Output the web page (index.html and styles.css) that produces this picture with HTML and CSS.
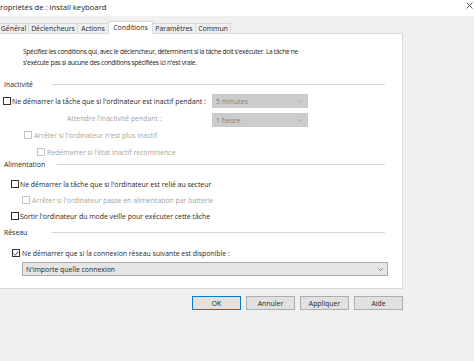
FILE: index.html
```html
<!DOCTYPE html>
<html lang="fr">
<head>
    <meta charset="UTF-8">
    <title>Propriétés de : install keyboard</title>
    <link rel="stylesheet" href="styles.css">
</head>
<body>
    <div class="titlebar">
        <span class="title">ropriétés de : install keyboard</span>
        <svg class="close" width="7" height="7" viewBox="0 0 7 7"><path d="M0.5 0.5L6.5 6.5M6.5 0.5L0.5 6.5" stroke="#333" stroke-width="0.8"/></svg>
    </div>

    <div class="tabs">
        <div class="tab tab-general">Général</div>
        <div class="tab tab-triggers">Déclencheurs</div>
        <div class="tab tab-actions">Actions</div>
        <div class="tab tab-conditions active">Conditions</div>
        <div class="tab tab-settings">Paramètres</div>
        <div class="tab tab-common">Commun</div>
    </div>

    <div class="panel">
        <p class="desc">Spécifiez les conditions qui, avec le déclencheur, déterminent si la tâche doit s'exécuter. La tâche ne<br>s'exécute pas si aucune des conditions spécifiées ici n'est vraie.</p>

        <div class="group group-idle"><span class="group-label">Inactivité</span><span class="group-line"></span></div>
        <div class="field-row row-idle">
            <label class="check"><span class="box"></span>Ne démarrer la tâche que si l'ordinateur est inactif pendant :</label>
            <div class="select disabled"><span>5 minutes</span><svg width="5" height="3" viewBox="0 0 5 3"><path d="M0.3 0.3L2.5 2.5L4.7 0.3" fill="none" stroke="#999" stroke-width="0.7"/></svg></div>
        </div>
        <div class="field-row row-wait">
            <span class="muted wait-label">Attendre l'inactivité pendant :</span>
            <div class="select disabled"><span>1 heure</span><svg width="5" height="3" viewBox="0 0 5 3"><path d="M0.3 0.3L2.5 2.5L4.7 0.3" fill="none" stroke="#999" stroke-width="0.7"/></svg></div>
        </div>
        <label class="check muted row-stop"><span class="box"></span>Arrêter si l'ordinateur n'est plus inactif</label>
        <label class="check muted row-restart"><span class="box"></span>Redémarrer si l'état inactif recommence</label>

        <div class="group group-power"><span class="group-label">Alimentation</span><span class="group-line"></span></div>
        <label class="check row-ac"><span class="box"></span>Ne démarrer la tâche que si l'ordinateur est relié au secteur</label>
        <label class="check muted row-battery"><span class="box"></span>Arrêter si l'ordinateur passe en alimentation par batterie</label>
        <label class="check row-wake"><span class="box"></span>Sortir l'ordinateur du mode veille pour exécuter cette tâche</label>

        <div class="group group-network"><span class="group-label">Réseau</span><span class="group-line"></span></div>
        <label class="check row-network"><span class="box checked"><svg width="7" height="7" viewBox="0 0 7 7"><path d="M0.8 3.6L2.7 5.4L6.2 1.2" fill="none" stroke="#222" stroke-width="0.9"/></svg></span>Ne démarrer que si la connexion réseau suivante est disponible :</label>
        <div class="select wide"><span>N'importe quelle connexion</span><svg width="5" height="3" viewBox="0 0 5 3"><path d="M0.3 0.3L2.5 2.5L4.7 0.3" fill="none" stroke="#555" stroke-width="0.7"/></svg></div>
    </div>

    <div class="actions">
        <button class="btn btn-default">OK</button>
        <button class="btn">Annuler</button>
        <button class="btn">Appliquer</button>
        <button class="btn">Aide</button>
    </div>
</body>
</html>
```

FILE: styles.css
```css
body {
    margin: 0;
    width: 474px;
    height: 361px;
    overflow: hidden;
    background-color: #f0f0f0;
    font-family: "Open Sans", sans-serif;
    font-size: 6.9px;
    color: #1e1e1e;
}
.titlebar {
    height: 16px;
    background-color: #fff;
    display: flex;
    align-items: center;
    justify-content: space-between;
}
.title {
    font-size: 7.7px;
    margin-top: -2px;
}
.close {
    margin: -6px 1px 0 0;
}
.tabs {
    display: flex;
    align-items: flex-end;
    height: 12px;
    margin: 5px 0 0 -2px;
}
.tab {
    box-sizing: border-box;
    height: 10px;
    line-height: 9px;
    margin-right: -1px;
    border: 1px solid #d9d9d9;
    border-bottom: none;
    background-color: #f0f0f0;
    text-align: center;
    white-space: nowrap;
}
.tab-general { width: 31px; }
.tab-triggers { width: 50px; }
.tab-actions { width: 32px; }
.tab-conditions { width: 45px; }
.tab-settings { width: 44px; }
.tab-common { width: 36px; }
.tab.active {
    position: relative;
    z-index: 1;
    height: 13px;
    line-height: 11px;
    margin-bottom: -1px;
    background-color: #fff;
}
.panel {
    box-sizing: border-box;
    width: 404px;
    height: 256px;
    margin-left: -1px;
    border: 1px solid #d9d9d9;
    background-color: #fff;
}
.desc {
    margin: 12px 0 0 23px;
    font-size: 6.6px;
    letter-spacing: -0.3px;
    line-height: 11px;
    white-space: nowrap;
}
.group {
    display: flex;
    align-items: center;
    width: 381px;
    height: 10px;
    padding-left: 4px;
}
.group-label {
    min-width: 36px;
    margin-right: 12px;
}
.group-line {
    flex: 1;
    border-top: 1px solid #d6d6d6;
}
.group-idle { margin-top: 11px; }
.group-power { margin-top: 0; }
.group-network { margin-top: 4px; }
.check {
    display: flex;
    align-items: center;
    height: 14px;
    white-space: nowrap;
}
.box {
    box-sizing: border-box;
    width: 8px;
    height: 8px;
    margin-right: 1px;
    border: 1px solid #333;
    background-color: #fff;
    display: flex;
    align-items: center;
    justify-content: center;
}
.muted {
    color: #a3a3a3;
}
.muted .box {
    border-color: #c4c4c4;
}
.field-row {
    display: grid;
    grid-template-columns: 212px 96px;
    align-items: center;
    height: 14px;
}
.row-idle { margin-top: 5px; }
.row-idle .check { padding-left: 3px; }
.row-wait { margin-top: 5px; }
.wait-label { padding-left: 67px; margin-top: -3px; }
.row-stop { margin-top: 1px; padding-left: 24px; }
.row-stop .box, .row-restart .box, .row-battery .box { margin-right: 2px; }
.row-restart { margin-top: 3px; padding-left: 37px; }
.row-ac { margin-top: 8px; padding-left: 11px; }
.row-battery { margin-top: 2px; padding-left: 22px; }
.row-wake { margin-top: 2px; padding-left: 11px; }
.row-network { margin-top: 9px; padding-left: 12px; }
.row-network .box { margin-right: 2px; }
.select {
    box-sizing: border-box;
    height: 14px;
    display: flex;
    align-items: center;
    justify-content: space-between;
    padding: 0 4px 0 3px;
    border: 1px solid #adadad;
    background-color: #e5e5e5;
    white-space: nowrap;
}
.select.disabled {
    border-color: #c9c9c9;
    background-color: #cccccc;
    color: #808080;
}
.select.wide {
    width: 366px;
    margin: 2px 0 0 22px;
}
.actions {
    display: flex;
    justify-content: flex-end;
    gap: 5px;
    width: 403px;
    margin-top: 7px;
}
.btn {
    box-sizing: border-box;
    width: 49px;
    height: 14px;
    padding: 0;
    border: 1px solid #adadad;
    background-color: #e1e1e1;
    font-family: inherit;
    font-size: 6.9px;
    color: #1e1e1e;
}
.btn-default {
    border-color: #0078d7;
}
```
